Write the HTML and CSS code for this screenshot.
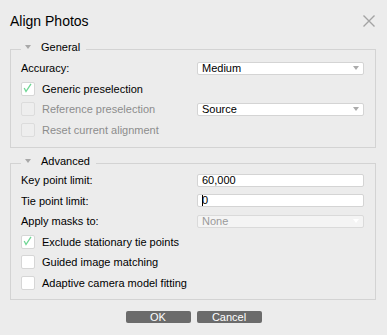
FILE: index.html
```html
<!DOCTYPE html>
<html>
<head>
<meta charset="utf-8">
<link rel="stylesheet" href="styles.css">
</head>
<body>
<div class="dialog">
  <div class="titlebar">
    <span class="title">Align Photos</span>
    <svg class="close" width="12" height="12" viewBox="0 0 12 12"><path d="M0.5 0.5 L11.5 11.5 M11.5 0.5 L0.5 11.5" stroke="#a3a3a3" stroke-width="1.4" fill="none"/></svg>
  </div>

  <fieldset class="group general">
    <legend class="legend"><span class="tri"></span>General</legend>
    <div class="row">
      <span class="label">Accuracy:</span>
      <div class="combo"><span>Medium</span><span class="arrow"></span></div>
    </div>
    <div class="row">
      <label class="check"><span class="box"><svg width="13" height="13" viewBox="0 0 13 13"><path d="M3.2 6 L5 9.5 L10 1.8" stroke="#6fd694" stroke-width="1.3" fill="none"/></svg></span>Generic preselection</label>
    </div>
    <div class="row disabled">
      <label class="check"><span class="box"></span>Reference preselection</label>
      <div class="combo"><span>Source</span><span class="arrow"></span></div>
    </div>
    <div class="row disabled">
      <label class="check"><span class="box"></span>Reset current alignment</label>
    </div>
  </fieldset>

  <fieldset class="group advanced">
    <legend class="legend"><span class="tri"></span>Advanced</legend>
    <div class="row">
      <span class="label">Key point limit:</span>
      <div class="input"><span>60,000</span></div>
    </div>
    <div class="row">
      <span class="label">Tie point limit:</span>
      <div class="input"><span class="caret"></span><span>0</span></div>
    </div>
    <div class="row">
      <span class="label">Apply masks to:</span>
      <div class="combo off"><span>None</span><span class="arrow"></span></div>
    </div>
    <div class="row">
      <label class="check"><span class="box"><svg width="13" height="13" viewBox="0 0 13 13"><path d="M3.2 6 L5 9.5 L10 1.8" stroke="#6fd694" stroke-width="1.3" fill="none"/></svg></span>Exclude stationary tie points</label>
    </div>
    <div class="row">
      <label class="check"><span class="box"></span>Guided image matching</label>
    </div>
    <div class="row">
      <label class="check"><span class="box"></span>Adaptive camera model fitting</label>
    </div>
  </fieldset>

  <div class="buttons">
    <button class="btn">OK</button>
    <button class="btn">Cancel</button>
  </div>
</div>
</body>
</html>
```

FILE: styles.css
```css
html, body {
  margin: 0;
  padding: 0;
  background: #ececec;
}
body {
  font-family: "Liberation Sans", Arial, sans-serif;
  font-size: 11px;
  color: #000;
}
.dialog {
  width: 387px;
  height: 335px;
  box-sizing: border-box;
  display: flex;
  flex-direction: column;
}
.titlebar {
  height: 40px;
  display: flex;
  align-items: center;
  justify-content: space-between;
  padding: 2px 12px 0 10px;
  box-sizing: border-box;
}
.title {
  font-size: 14px;
  line-height: 16px;
}
.close {
  display: block;
}
.group {
  margin: 0 11px 0 10px;
  padding: 0 11px 0 10px;
  border: 1px solid #d3d3d3;
  min-width: 0;
}
.general {
  padding-top: 0;
  padding-bottom: 7px;
}
.advanced {
  margin-top: 6px;
  padding-top: 0;
  padding-bottom: 6px;
}
.advanced .row:first-of-type {
  margin-top: -2px;
}
.legend {
  display: flex;
  align-items: flex-start;
  height: 18px;
  box-sizing: border-box;
  line-height: 14px;
  padding: 0 6px 4px 4px;
  margin: 0;
}
.tri {
  width: 0;
  height: 0;
  border-left: 3.5px solid transparent;
  border-right: 3.5px solid transparent;
  border-top: 4px solid #a8a8a8;
  margin-right: 10px;
  margin-top: 5px;
}
.row {
  display: grid;
  grid-template-columns: 1fr 167px;
  align-items: center;
  height: 20.5px;
}
.label {
  white-space: nowrap;
}
.check {
  display: flex;
  align-items: center;
  white-space: nowrap;
}
.box {
  width: 12px;
  height: 12px;
  background: #fff;
  border: 1px solid #d6d6d6;
  border-radius: 2px;
  margin-right: 7px;
  position: relative;
  flex: none;
}
.box svg {
  position: absolute;
  left: -1px;
  top: -1px;
}
.disabled .check {
  color: #8c8c8c;
}
.disabled .box {
  background: #eeeeee;
  border-color: #dcdcdc;
}
.combo, .input {
  grid-column: 2;
  height: 13px;
  box-sizing: border-box;
  background: #fff;
  border: 1px solid #d4d4d4;
  border-radius: 2px;
  display: flex;
  align-items: center;
  justify-content: space-between;
  padding: 0 4px 0 4px;
  line-height: 11px;
}
.input {
  justify-content: flex-start;
}
.arrow {
  width: 0;
  height: 0;
  border-left: 3.5px solid transparent;
  border-right: 3.5px solid transparent;
  border-top: 4px solid #ababab;
}
.combo.off {
  background: #f4f4f4;
  border-color: #dadada;
  color: #9a9a9a;
}
.combo.off .arrow {
  border-top-color: #ffffff;
}
.caret {
  display: inline-block;
  width: 1px;
  height: 11px;
  background: #000;
  margin-right: -1px;
}
.buttons {
  display: flex;
  justify-content: center;
  gap: 6px;
  margin-top: 11px;
}
.btn {
  width: 65px;
  height: 12px;
  padding: 0;
  border: none;
  border-radius: 2px;
  background: #6b6b6b;
  color: #fff;
  font-family: "Liberation Sans", Arial, sans-serif;
  font-size: 11px;
  line-height: 12px;
}
```
